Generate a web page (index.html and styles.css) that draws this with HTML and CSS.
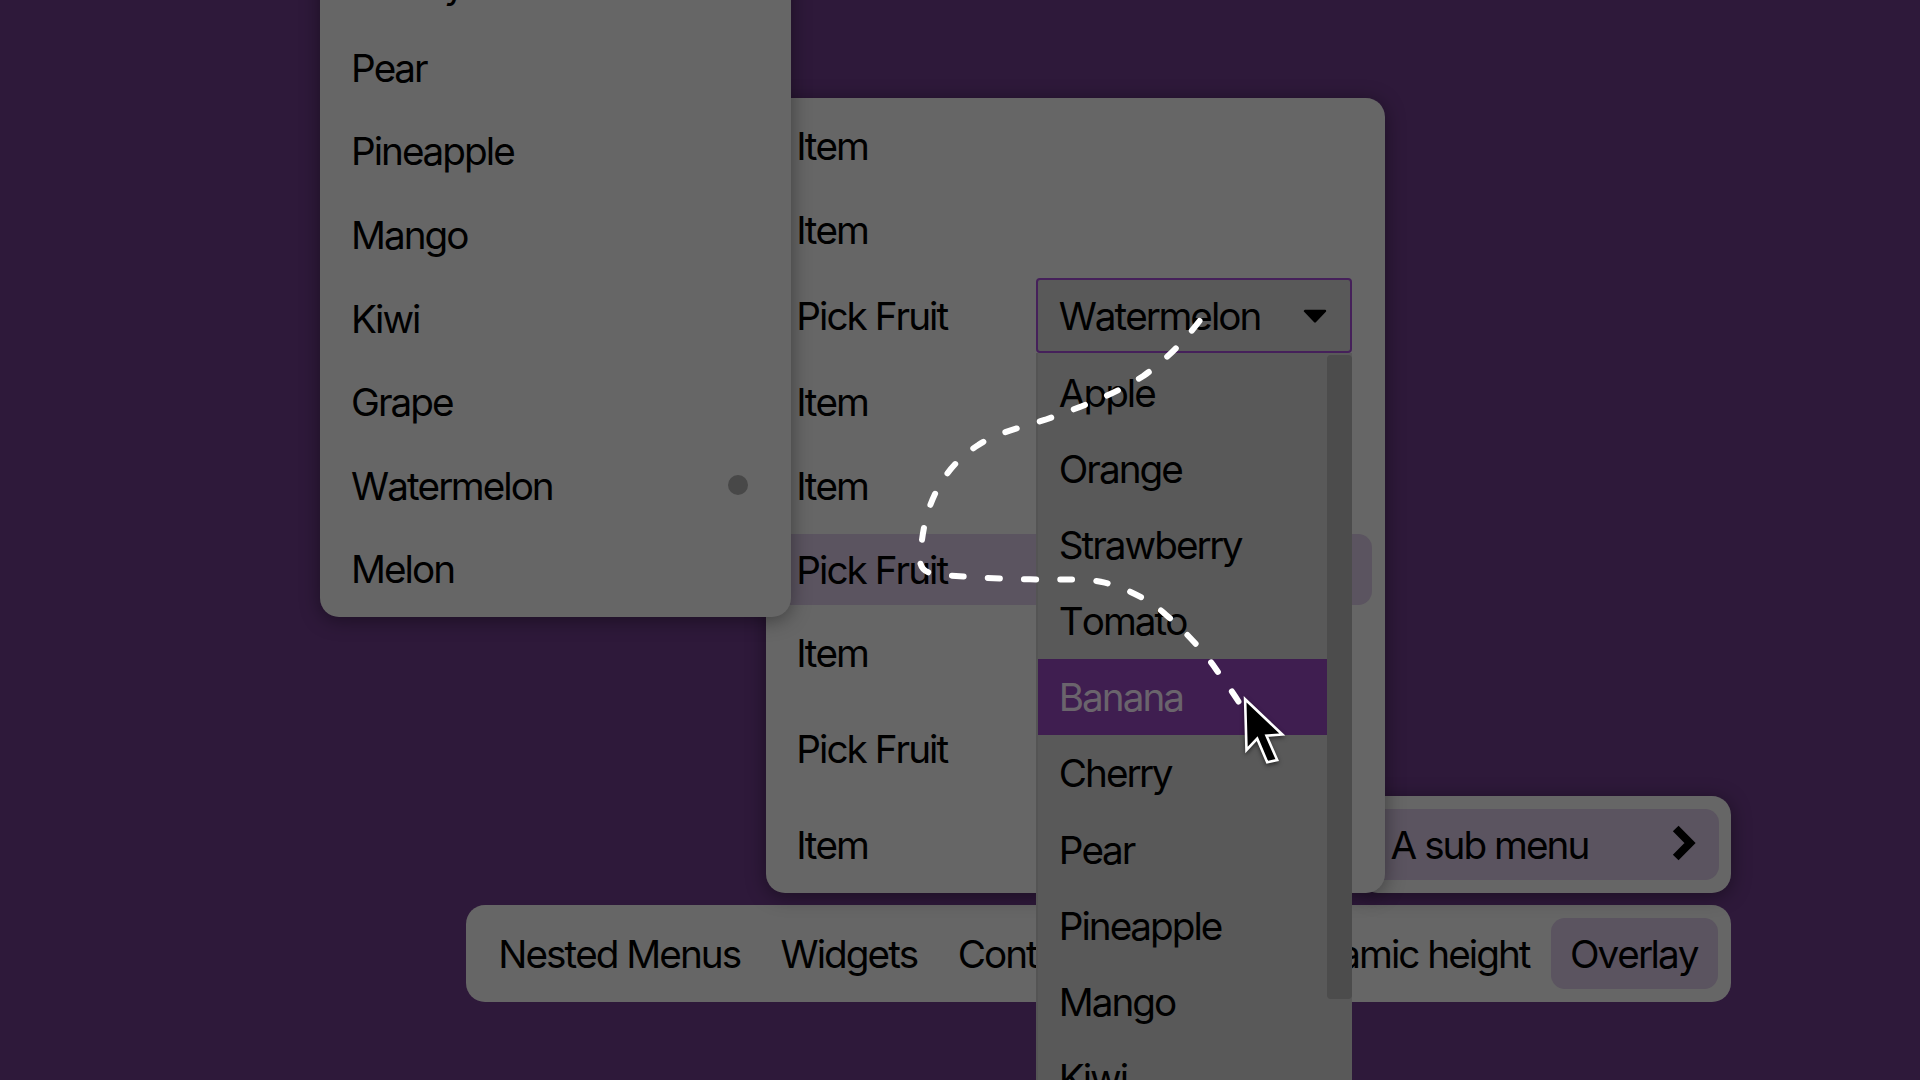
FILE: index.html
```html
<!DOCTYPE html>
<html lang="en">
<head>
<meta charset="utf-8">
<title>Overlay menus</title>
<link rel="stylesheet" href="styles.css">
</head>
<body>
<main class="stage">
  <nav class="menubar">
    <span class="item">Nested Menus</span>
    <span class="item">Widgets</span>
    <span class="item">Content</span>
    <span class="item push">Dynamic height</span>
    <span class="item active">Overlay</span>
  </nav>

  <div class="menu submenu">
    <div class="item active"><span>A sub menu</span>
      <svg class="chevron" viewBox="0 0 24 38"><path d="M3.700 4.500 18 19 3.700 33.500" fill="none" stroke="#000" stroke-width="8"/></svg>
    </div>
  </div>

  <div class="menu items">
    <div class="item">Item</div>
    <div class="item">Item</div>
    <div class="item with-select"><span>Pick Fruit</span>
      <div class="select"><span>Watermelon</span>
        <svg class="caret" viewBox="0 0 24 14"><path d="M2 2H22L12 12.500Z" stroke="#000" stroke-width="2.400" stroke-linejoin="round"/></svg>
        <div class="dropdown">
          <div class="options">
            <div class="option">Apple</div>
            <div class="option">Orange</div>
            <div class="option">Strawberry</div>
            <div class="option">Tomato</div>
            <div class="option selected">Banana</div>
            <div class="option">Cherry</div>
            <div class="option">Pear</div>
            <div class="option">Pineapple</div>
            <div class="option">Mango</div>
            <div class="option">Kiwi</div>
          </div>
          <div class="scrollbar"></div>
        </div>
      </div>
    </div>
    <div class="item">Item</div>
    <div class="item">Item</div>
    <div class="item active">Pick Fruit</div>
    <div class="item">Item</div>
    <div class="item tall">Pick Fruit</div>
    <div class="item">Item</div>
  </div>

  <div class="menu fruits">
    <div class="item">Cherry</div>
    <div class="item">Pear</div>
    <div class="item">Pineapple</div>
    <div class="item">Mango</div>
    <div class="item">Kiwi</div>
    <div class="item">Grape</div>
    <div class="item"><span>Watermelon</span><i class="dot"></i></div>
    <div class="item">Melon</div>
  </div>

  <svg class="pointer" viewBox="0 0 1920 1080">
    <path class="trail" pathLength="768" d="M1199.500 321C1181 345 1163 362 1143.700 375.700C1112 396 1079 407.500 1045.300 419.700C1020 428 996 433 978.300 445C950 463 935 488 927 515C922 533 921 548 920 561Q921 571 932 573.500C958 577 994 578.500 1030 579.300C1060 580 1085 578 1102 582C1122 586 1150 600 1165 614C1185 631 1203 651 1214.300 666.700C1222 678 1230 688 1238.500 701.500"/>
    <path class="arrow" d="M1245.100 699.200 1282.300 734.500 1266.500 735.700 1277.200 760.100 1267.200 762.300 1257.200 738.700 1246.500 750Z"/>
  </svg>
</main>
</body>
</html>
```
FILE: styles.css
```css
* { box-sizing: border-box; }

body {
  margin: 0;
  background: #2e193a;
  color: #000;
  font-family: Inter, "Liberation Sans", sans-serif;
  font-size: 38.7px;
  font-kerning: none;
  letter-spacing: -0.051em;
  white-space: nowrap;
}

.stage {
  position: relative;
  display: flex;
  flex-direction: column;
  justify-content: flex-end;
  width: 1920px;
  height: 1080px;
  padding: 0 189px 78.3px 466.3px;
  overflow: hidden;
}

.menubar {
  display: flex;
  padding: 12.6px;
  border-radius: 19px;
  background: #666;
}

.item {
  display: flex;
  align-items: center;
  justify-content: space-between;
  flex: none;
  height: 71.3px;
  padding: 0 21px 0 18.3px;
  border-radius: 14px;
}

.menubar .item,
.submenu .item { padding-top: 1.4px; }

.menubar .item { padding-left: 19.4px; }

.active { background: #5b5460; }
.push { margin-left: auto; }

.menu {
  position: absolute;
  display: flex;
  flex-direction: column;
  gap: 12.5px;
  padding: 12.5px;
  border-radius: 19px;
  background: #666;
  box-shadow: 0 3px 20px rgba(0, 0, 0, 0.4);
}

.submenu {
  top: 796.3px;
  right: 189px;
  width: 372px;
}

.submenu .item { padding-left: 19px; }

.chevron { width: 24px; height: 38px; margin: -5px 2px 0 0; }

.items {
  top: 98.3px;
  left: 765.5px;
  width: 619px;
  z-index: 1;
}

.with-select { height: 75.5px; padding-right: 20px; }
.tall { height: 95.3px; }

.select {
  position: relative;
  display: flex;
  align-items: center;
  justify-content: space-between;
  width: 316.3px;
  height: 75px;
  margin-bottom: 1.3px;
  padding: 0 23px 0 21px;
  border: 2px solid #45205a;
  border-radius: 4px;
  background: #595959;
}

.caret { width: 24px; height: 14px; }

.dropdown {
  position: absolute;
  top: 73px;
  left: -2px;
  display: flex;
  width: 316.3px;
  height: 780px;
  padding-top: 1.5px;
  border-left: 2px solid #545454;
  background: #595959;
}

.options { flex: 1; }

.option {
  height: 76.2px;
  padding-left: 21px;
  line-height: 76.2px;
}

.selected { background: #3f1e50; color: #6a646c; }

.scrollbar {
  width: 24.6px;
  height: 644px;
  border-radius: 4px;
  background: #4c4c4c;
}

.fruits {
  bottom: 463.5px;
  left: 320.2px;
  width: 470.4px;
  gap: 12.3px;
  padding-bottom: 11.4px;
  z-index: 2;
}

.dot {
  width: 20px;
  height: 20px;
  margin: -2px 9px 0 0;
  border-radius: 50%;
  background: #484848;
}

.pointer {
  position: absolute;
  inset: 0;
  z-index: 3;
}

.trail {
  fill: none;
  stroke: #fff;
  stroke-width: 6;
  stroke-linecap: round;
  stroke-dasharray: 12 24;
}

.arrow {
  fill: #000;
  stroke: #fff;
  stroke-width: 2.6;
  filter: drop-shadow(0 2px 2px rgba(0, 0, 0, 0.5));
}
```
